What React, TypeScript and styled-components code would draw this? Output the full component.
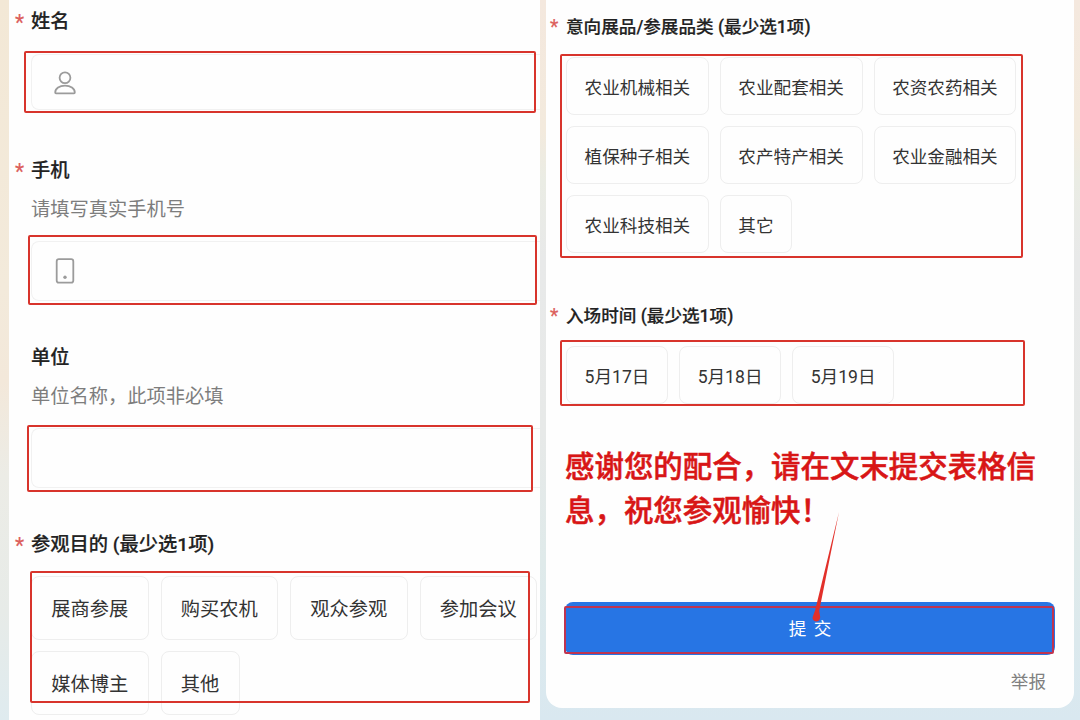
import React from 'react';
import styled, { createGlobalStyle } from 'styled-components';

const purposes = ['展商参展', '购买农机', '观众参观', '参加会议', '媒体博主', '其他'];

const categories = [
    '农业机械相关',
    '农业配套相关',
    '农资农药相关',
    '植保种子相关',
    '农产特产相关',
    '农业金融相关',
    '农业科技相关',
    '其它',
];

const dates = ['5月17日', '5月18日', '5月19日'];

const UserIcon = () => (
    <svg width="24" height="26" viewBox="0 0 24 26" fill="none" stroke="#9b9b9b" strokeWidth="1.8">
        <circle cx="12" cy="8.800" r="5.400" />
        <path d="M2.200 23.600c0-4.300 4.300-6.900 9.800-6.900s9.800 2.600 9.800 6.900c0 .5-.3.800-.8.800H3c-.5 0-.8-.3-.8-.8z" strokeLinejoin="round" />
    </svg>
);

const PhoneIcon = () => (
    <svg width="24" height="26" viewBox="0 0 24 26" fill="none" stroke="#9b9b9b" strokeWidth="1.8">
        <rect x="3.700" y="1.200" width="16.600" height="23.400" rx="2.200" />
        <circle cx="12" cy="19.300" r="1.700" fill="#9b9b9b" stroke="none" />
    </svg>
);

const App = () => {
    return (
        <>
            <GlobalStyle />
            <Page>
                <LeftScreen>
                    <LeftCard>
                        <Section>
                            <Label><Star>*</Star>姓名</Label>
                            <Field $height={56}>
                                <UserIcon />
                                <Frame $inset="-4px 4px -4px -8px" />
                            </Field>
                        </Section>

                        <Section>
                            <Label><Star>*</Star>手机</Label>
                            <Hint>请填写真实手机号</Hint>
                            <Field $height={60}>
                                <PhoneIcon />
                                <Frame $inset="-7px 3px -5px -4px" />
                            </Field>
                        </Section>

                        <Section>
                            <Label><Star />单位</Label>
                            <Hint>单位名称，此项非必填</Hint>
                            <Field $height={60}>
                                <Frame $inset="-4px 7px -5px -5px" />
                            </Field>
                        </Section>

                        <Section>
                            <Label><Star>*</Star>参观目的 (最少选1项)</Label>
                            <Chips $large>
                                {purposes.map((name) => (
                                    <Chip key={name} $large>{name}</Chip>
                                ))}
                                <Frame $inset="-5px 10px 12px -1px" />
                            </Chips>
                        </Section>
                    </LeftCard>
                </LeftScreen>

                <RightScreen>
                    <RightCard>
                        <Label><Star>*</Star>意向展品/参展品类 (最少选1项)</Label>
                        <Chips>
                            {categories.map((name) => (
                                <Chip key={name}>{name}</Chip>
                            ))}
                            <Frame $inset="-3px 32px -5px -6px" />
                        </Chips>

                        <DateSection>
                            <Label><Star>*</Star>入场时间 (最少选1项)</Label>
                            <Chips>
                                {dates.map((name) => (
                                    <Chip key={name}>{name}</Chip>
                                ))}
                                <Frame $inset="-6px 30px -2px -6px" />
                            </Chips>
                        </DateSection>

                        <Notice>感谢您的配合，请在文末提交表格信息，祝您参观愉快！</Notice>

                        <Submit>
                            提 交
                            <Frame $inset="4px 1px 1px -1px" $color="#bf3450" />
                            <Arrow width="32" height="112" viewBox="0 0 32 112">
                                <path d="M28 1 L8.200 100 L9.200 106 Q9 110 5.500 110.500 Q1.500 110 1.500 106.500 L4.200 99 Z" fill="#e2302a" />
                            </Arrow>
                        </Submit>
                        <Report>举报</Report>
                    </RightCard>
                </RightScreen>
            </Page>
        </>
    );
};

export default App;

// Styled Components
const GlobalStyle = createGlobalStyle`
  * {
    box-sizing: border-box;
  }

  body {
    margin: 0;
    overflow: hidden;
    font-family: Roboto, 'Noto Sans CJK SC', sans-serif;
    color: #333;
  }
`;

const Page = styled.div`
  display: flex;
  width: 1080px;
  height: 720px;
  overflow: hidden;
`;

const LeftScreen = styled.div`
  width: 540px;
  padding-left: 9px;
  background: linear-gradient(#f3e8d6 0%, #f3eadb 40%, #f3e8da 53%, #ecece6 66%, #e7ebe8 85%, #dfebef 100%);
`;

const LeftCard = styled.div`
  display: flex;
  flex-direction: column;
  gap: 43px;
  height: 720px;
  padding: 8px 0 0 22px;
  background: #fefefe;
  font-size: 19.25px;
`;

const RightScreen = styled.div`
  width: 540px;
  padding: 0 6px 12px;
  background: linear-gradient(#f4e8de 0%, #f3eadd 18%, #eaece4 25%, #e8e9e9 36%, #e7e9e8 60%, #dfeaea 78%, #d9e8f0 100%);
`;

const RightCard = styled.div`
  height: 708px;
  padding: 13px 19px 0 20px;
  background: #fefefe;
  border-radius: 0 0 16px 16px;
  font-size: 17.6px;
`;

const Section = styled.section`
  &:first-child {
    margin-bottom: 4px;
  }
`;

const DateSection = styled.section`
  margin-top: 49px;
`;

const Label = styled.div`
  display: flex;
  height: 28px;
  line-height: 28px;
  font-weight: 500;
  color: #222;
  -webkit-text-stroke: 0.2px currentColor;
  white-space: nowrap;
`;

const Star = styled.span`
  width: 16px;
  margin-left: -16px;
  padding-top: 1px;
  font-size: 1.1em;
  font-weight: 400;
  color: #dc5f5c;
`;

const Hint = styled.div`
  margin: 11px 0 -1px;
  height: 28px;
  line-height: 28px;
  color: #7d7d7d;
`;

const Field = styled.div<{ $height: number }>`
  position: relative;
  display: flex;
  align-items: center;
  margin-top: 18px;
  height: ${({ $height }) => $height}px;
  padding-left: 21px;
  border: 1px solid #f1f1f1;
  border-right: none;
  border-radius: 8px 0 0 8px;
`;

const Chips = styled.div<{ $large?: boolean }>`
  position: relative;
  display: flex;
  flex-wrap: wrap;
  gap: 11px;
  margin-top: ${({ $large }) => ($large ? 17 : 16)}px;
`;

const Chip = styled.div<{ $large?: boolean }>`
  display: flex;
  align-items: center;
  height: ${({ $large }) => ($large ? 64 : 58)}px;
  padding: 0 1em;
  margin-right: ${({ $large }) => ($large ? 1 : 0)}px;
  border: 1px solid #eee;
  border-radius: 8px;
  white-space: nowrap;
`;

// Red marker drawn over the part to fill in
const Frame = styled.div<{ $inset: string; $color?: string }>`
  position: absolute;
  inset: ${({ $inset }) => $inset};
  border: 2px solid ${({ $color }) => $color ?? '#d8342c'};
  border-radius: 2px;
  pointer-events: none;
`;

const Notice = styled.p`
  margin: 41px 0 0 -1px;
  width: 475px;
  font-size: 29.45px;
  line-height: 44px;
  font-weight: 500;
  color: #d81616;
  -webkit-text-stroke: 0.5px currentColor;
`;

const Submit = styled.button`
  position: relative;
  display: block;
  width: 490px;
  height: 53px;
  margin: 69px 0 0 -1px;
  padding: 0 0 2px;
  border: none;
  border-radius: 8px;
  background: #2775e4;
  color: #fff;
  font-family: inherit;
  font-size: 17.6px;
  word-spacing: 3px;
`;

const Arrow = styled.svg`
  position: absolute;
  left: 246px;
  top: -91px;
`;

const Report = styled.div`
  margin-top: 13px;
  padding-right: 9px;
  line-height: 28px;
  text-align: right;
  color: #808080;
`;
